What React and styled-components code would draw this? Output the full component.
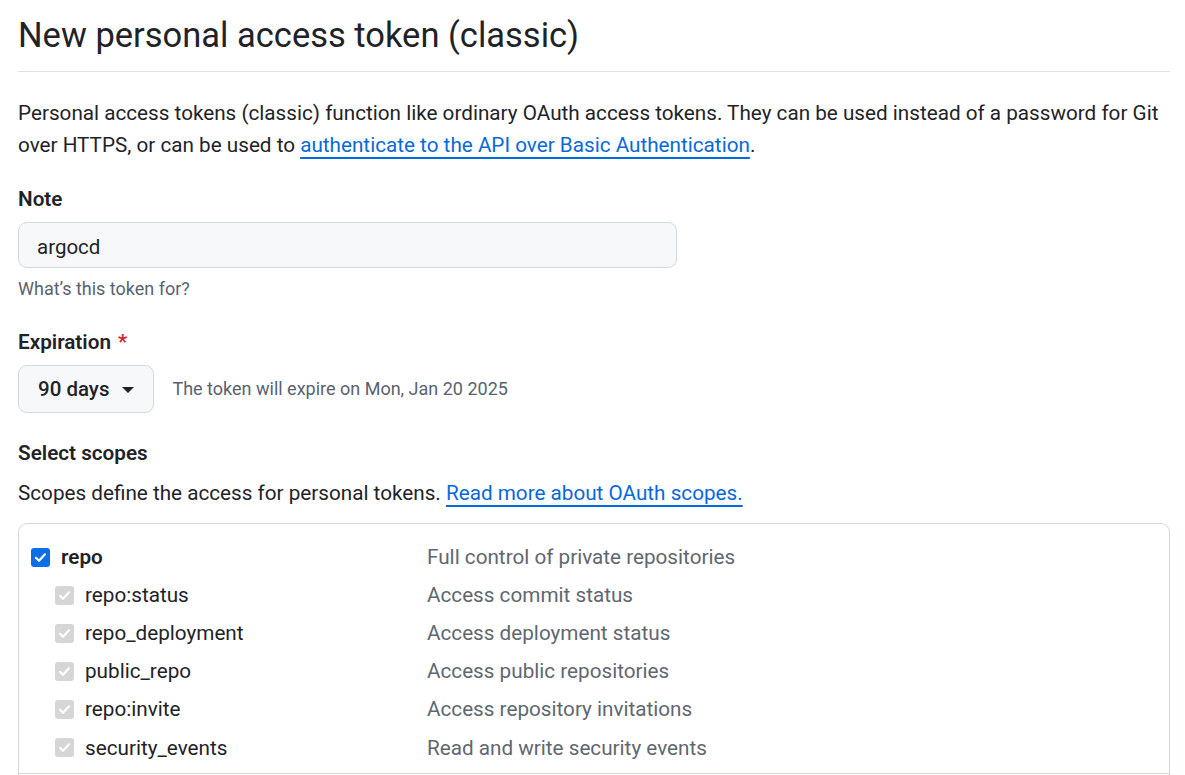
import React from "react";
import styled, { createGlobalStyle } from "styled-components";

const FONT = `Roboto, "Noto Sans", "Liberation Sans", sans-serif`;

const GlobalStyle = createGlobalStyle`
  html, body {
    margin: 0;
    padding: 0;
    background: #ffffff;
  }
  body {
    font-family: ${FONT};
    color: #1f2328;
    font-size: 20.7px;
    line-height: 32px;
  }
  * {
    box-sizing: border-box;
  }
`;

const Page = styled("div")`
  padding: 8px 15px 0 18px;
  height: 775px;
  overflow: hidden;
`;

const Subhead = styled("div")`
  padding-bottom: 9px;
  border-bottom: 1px solid #dde2e7;
`;

const Heading = styled("h2")`
  margin: 0;
  font-size: 34.5px;
  line-height: 54px;
  font-weight: 400;
`;

const Lead = styled("p")`
  margin: 25px 0 0;
  line-height: 32px;
`;

const Link = styled("a")`
  color: #0969da;
  text-decoration: underline;
  text-decoration-thickness: 2px;
  text-underline-offset: 5px;
  cursor: pointer;
`;

const Field = styled("div")`
  margin-top: ${(p) => p.$top}px;
  display: flex;
  flex-direction: column;
  align-items: flex-start;
`;

const Label = styled("label")`
  font-weight: 600;
  line-height: 32px;
  margin-bottom: ${(p) => (p.$flush ? 0 : 7)}px;
`;

const Required = styled("span")`
  color: #d1242f;
  margin-left: 7px;
`;

const TextInput = styled("input")`
  width: 659px;
  height: 46px;
  padding: 3px 18px 0;
  font-family: ${FONT};
  font-size: 20.5px;
  color: #1f2328;
  background: #f6f8fa;
  border: 1.5px solid #d1d9e0;
  border-radius: 9px;
  outline: none;
`;

const Hint = styled("div")`
  margin-top: 7px;
  font-size: 18px;
  line-height: 27px;
  color: #59636e;
`;

const ExpiryRow = styled("div")`
  display: flex;
  align-items: center;
  gap: 18px;
`;

const SelectButton = styled("button")`
  display: inline-flex;
  align-items: center;
  gap: 13px;
  height: 48px;
  padding: 0 19px;
  font-family: ${FONT};
  font-size: 20.5px;
  font-weight: 500;
  color: #1f2328;
  background: #f6f8fa;
  border: 1.5px solid #d1d9e0;
  border-radius: 9px;
  cursor: pointer;
`;

const Caret = styled("span")`
  width: 0;
  height: 0;
  border-left: 6px solid transparent;
  border-right: 6px solid transparent;
  border-top: 6px solid #1f2328;
  margin-top: 2px;
`;

const Note = styled("span")`
  font-size: 18px;
  color: #59636e;
`;

const Desc = styled("p")`
  margin: 8px 0 0;
  line-height: 32px;
`;

const ScopeBox = styled("div")`
  margin-top: 14px;
  border: 1.5px solid #d1d9e0;
  border-radius: 9px;
  height: 400px;
`;

const ScopeGroup = styled("div")`
  padding: 14px 12px 6px;
  border-bottom: 1.5px solid #d1d9e0;
`;

const ScopeRow = styled("div")`
  display: grid;
  grid-template-columns: 396px 1fr;
  align-items: center;
  height: 38.1px;
`;

const ScopeName = styled("div")`
  display: flex;
  align-items: center;
  gap: 11px;
  padding-left: ${(p) => (p.$child ? 24 : 0)}px;
  font-weight: ${(p) => (p.$child ? 400 : 600)};
`;

const Box = styled("span")`
  width: 19px;
  height: 19px;
  border-radius: 3px;
  display: inline-flex;
  align-items: center;
  justify-content: center;
  background: ${(p) => (p.$disabled ? "#d6d6d6" : "#0b6fe8")};
  flex: none;
`;

const ScopeDesc = styled("div")`
  color: #5f6770;
`;

const Check = ({ disabled }) => (
  <Box $disabled={disabled}>
    <svg width="13" height="13" viewBox="0 0 13 13">
      <path
        d="M2 6.8 L5 9.8 L11 3.3"
        fill="none"
        stroke="#ffffff"
        strokeWidth="2.2"
        strokeLinecap="round"
        strokeLinejoin="round"
      />
    </svg>
  </Box>
);

const scopes = [
  { name: "repo", desc: "Full control of private repositories" },
  { name: "repo:status", desc: "Access commit status", child: true },
  { name: "repo_deployment", desc: "Access deployment status", child: true },
  { name: "public_repo", desc: "Access public repositories", child: true },
  { name: "repo:invite", desc: "Access repository invitations", child: true },
  { name: "security_events", desc: "Read and write security events", child: true },
];

function App() {
  return (
    <>
      <GlobalStyle />
      <Page>
        <Subhead>
          <Heading>New personal access token (classic)</Heading>
        </Subhead>

        <Lead>
          Personal access tokens (classic) function like ordinary OAuth access
          tokens. They can be used instead of a password for Git over HTTPS, or
          can be used to{" "}
          <Link>authenticate to the API over Basic Authentication</Link>.
        </Lead>

        <Field $top={22}>
          <Label>Note</Label>
          <TextInput defaultValue="argocd" />
          <Hint>What’s this token for?</Hint>
        </Field>

        <Field $top={24}>
          <Label>
            Expiration<Required>*</Required>
          </Label>
          <ExpiryRow>
            <SelectButton>
              90 days <Caret />
            </SelectButton>
            <Note>The token will expire on Mon, Jan 20 2025</Note>
          </ExpiryRow>
        </Field>

        <Field $top={24}>
          <Label as="div" $flush>
            Select scopes
          </Label>
        </Field>
        <Desc>
          Scopes define the access for personal tokens.{" "}
          <Link>Read more about OAuth scopes.</Link>
        </Desc>

        <ScopeBox>
          <ScopeGroup>
            {scopes.map((s) => (
              <ScopeRow key={s.name}>
                <ScopeName $child={s.child}>
                  <Check disabled={s.child} />
                  {s.name}
                </ScopeName>
                <ScopeDesc>{s.desc}</ScopeDesc>
              </ScopeRow>
            ))}
          </ScopeGroup>
        </ScopeBox>
      </Page>
    </>
  );
}

export default App;
